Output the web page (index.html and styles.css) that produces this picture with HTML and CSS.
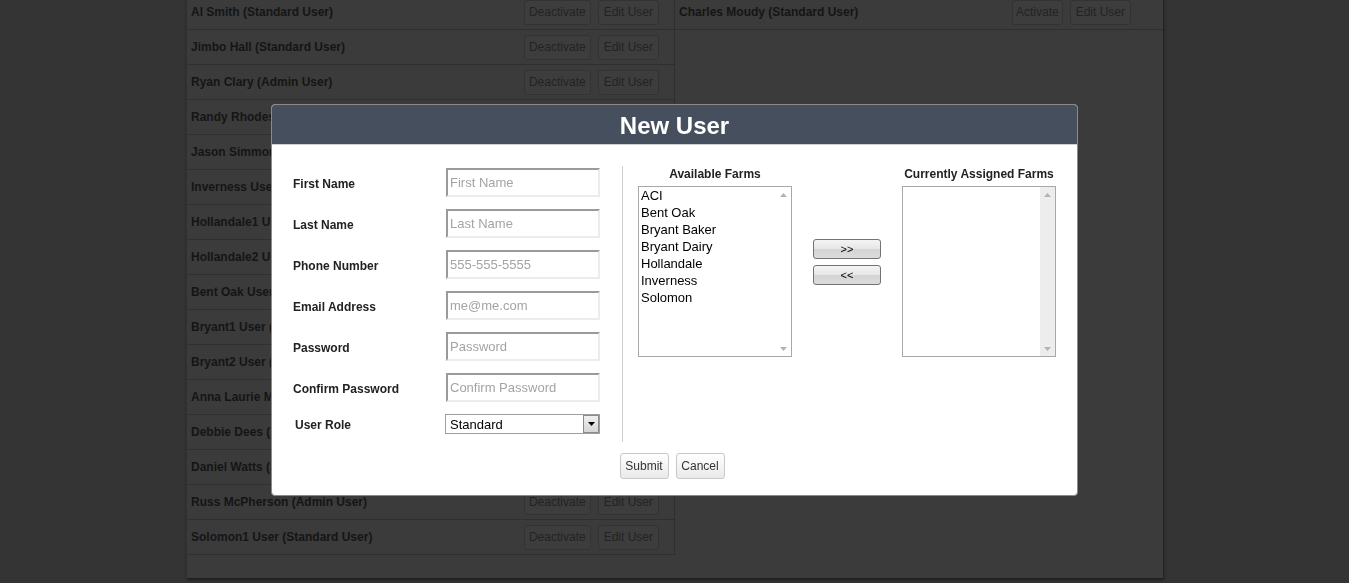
FILE: index.html
```html
<!DOCTYPE html>
<html>
<head>
<meta charset="utf-8">
<title>Users</title>
<link rel="stylesheet" href="styles.css">
</head>
<body>
<div class="panel">
  <div class="col col-left">
    <div class="row"><span class="name">Al Smith (Standard User)</span><button class="rbtn rbtn-d">Deactivate</button><button class="rbtn">Edit User</button></div>
    <div class="row"><span class="name">Jimbo Hall (Standard User)</span><button class="rbtn rbtn-d">Deactivate</button><button class="rbtn">Edit User</button></div>
    <div class="row"><span class="name">Ryan Clary (Admin User)</span><button class="rbtn rbtn-d">Deactivate</button><button class="rbtn">Edit User</button></div>
    <div class="row"><span class="name">Randy Rhodes (Standard User)</span><button class="rbtn rbtn-d">Deactivate</button><button class="rbtn">Edit User</button></div>
    <div class="row"><span class="name">Jason Simmons (Standard User)</span><button class="rbtn rbtn-d">Deactivate</button><button class="rbtn">Edit User</button></div>
    <div class="row"><span class="name">Inverness User (Standard User)</span><button class="rbtn rbtn-d">Deactivate</button><button class="rbtn">Edit User</button></div>
    <div class="row"><span class="name">Hollandale1 User (Standard User)</span><button class="rbtn rbtn-d">Deactivate</button><button class="rbtn">Edit User</button></div>
    <div class="row"><span class="name">Hollandale2 User (Standard User)</span><button class="rbtn rbtn-d">Deactivate</button><button class="rbtn">Edit User</button></div>
    <div class="row"><span class="name">Bent Oak User (Standard User)</span><button class="rbtn rbtn-d">Deactivate</button><button class="rbtn">Edit User</button></div>
    <div class="row"><span class="name">Bryant1 User (Standard User)</span><button class="rbtn rbtn-d">Deactivate</button><button class="rbtn">Edit User</button></div>
    <div class="row"><span class="name">Bryant2 User (Standard User)</span><button class="rbtn rbtn-d">Deactivate</button><button class="rbtn">Edit User</button></div>
    <div class="row"><span class="name">Anna Laurie Moore (Standard User)</span><button class="rbtn rbtn-d">Deactivate</button><button class="rbtn">Edit User</button></div>
    <div class="row"><span class="name">Debbie Dees (Admin User)</span><button class="rbtn rbtn-d">Deactivate</button><button class="rbtn">Edit User</button></div>
    <div class="row"><span class="name">Daniel Watts (Standard User)</span><button class="rbtn rbtn-d">Deactivate</button><button class="rbtn">Edit User</button></div>
    <div class="row"><span class="name">Russ McPherson (Admin User)</span><button class="rbtn rbtn-d">Deactivate</button><button class="rbtn">Edit User</button></div>
    <div class="row"><span class="name">Solomon1 User (Standard User)</span><button class="rbtn rbtn-d">Deactivate</button><button class="rbtn">Edit User</button></div>
  </div>
  <div class="col col-right">
    <div class="row row-r"><span class="name">Charles Moudy (Standard User)</span><button class="rbtn rbtn-a">Activate</button><button class="rbtn">Edit User</button></div>
  </div>
</div>

<div class="modal">
  <div class="modal-head">New User</div>
  <div class="modal-body">
    <div class="form">
      <label class="lbl">First Name</label><div class="inp">First Name</div>
      <label class="lbl">Last Name</label><div class="inp">Last Name</div>
      <label class="lbl">Phone Number</label><div class="inp">555-555-5555</div>
      <label class="lbl">Email Address</label><div class="inp">me@me.com</div>
      <label class="lbl">Password</label><div class="inp">Password</div>
      <label class="lbl">Confirm Password</label><div class="inp">Confirm Password</div>
      <label class="lbl lbl-role">User Role</label>
      <div class="sel"><span class="sel-val">Standard</span><span class="sel-arrow"><svg width="7" height="4" viewBox="0 0 7 4"><path d="M0 0H7L3.5 4Z" fill="#000"/></svg></span></div>
    </div>
    <div class="farms">
      <div class="fcol">
        <div class="fhead">Available Farms</div>
        <div class="lbox">
          <div class="litems">
            <div>ACI</div><div>Bent Oak</div><div>Bryant Baker</div><div>Bryant Dairy</div><div>Hollandale</div><div>Inverness</div><div>Solomon</div>
          </div>
          <div class="sbar sbar-white"><svg width="7" height="4" viewBox="0 0 7 4"><path d="M0 4H7L3.5 0Z" fill="#b4b4b4"/></svg><svg width="7" height="4" viewBox="0 0 7 4"><path d="M0 0H7L3.5 4Z" fill="#b4b4b4"/></svg></div>
        </div>
      </div>
      <div class="mid">
        <button class="mbtn">&gt;&gt;</button>
        <button class="mbtn">&lt;&lt;</button>
      </div>
      <div class="fcol">
        <div class="fhead">Currently Assigned Farms</div>
        <div class="lbox">
          <div class="litems"></div>
          <div class="sbar"><svg width="7" height="4" viewBox="0 0 7 4"><path d="M0 4H7L3.5 0Z" fill="#b4b4b4"/></svg><svg width="7" height="4" viewBox="0 0 7 4"><path d="M0 0H7L3.5 4Z" fill="#b4b4b4"/></svg></div>
        </div>
      </div>
    </div>
  </div>
  <div class="modal-foot">
    <button class="fbtn">Submit</button>
    <button class="fbtn">Cancel</button>
  </div>
</div>
</body>
</html>
```

FILE: styles.css
```css
html, body {
  margin: 0;
  padding: 0;
}
body {
  background: #343434;
  font-family: "Liberation Sans", Arial, sans-serif;
  height: 583px;
  overflow: hidden;
}
.panel {
  margin-left: 186px;
  margin-top: -5px;
  width: 977px;
  height: 583px;
  box-sizing: border-box;
  background: #3b3b3b;
  border-left: 1px solid #303030;
  box-shadow: 1px 2px 3px rgba(0,0,0,0.45);
  display: flex;
  align-items: flex-start;
}
.col {
  width: 488px;
  box-sizing: border-box;
}
.col-left {
  border-right: 1px solid #2f2f2f;
}
.row {
  height: 35px;
  box-sizing: border-box;
  border-bottom: 1px solid #2f2f2f;
  display: flex;
  align-items: center;
  padding: 0 15px 0 4px;
  gap: 7px;
}
.row-r {
  padding-right: 32px;
}
.name {
  flex: 1;
  font-size: 12px;
  font-weight: bold;
  color: #151515;
}
.rbtn {
  height: 25px;
  padding: 0 5px;
  border: 1px solid #333;
  border-radius: 3px;
  background: #3d3d3d;
  font-family: "Liberation Sans", Arial, sans-serif;
  font-size: 12px;
  color: #232323;
}
.rbtn-d {
  padding: 0 4px;
}
.rbtn-a {
  padding: 0 3px;
}
.modal {
  position: fixed;
  left: 271px;
  top: 104px;
  width: 807px;
  height: 392px;
  box-sizing: border-box;
  background: #fff;
  border: 1px solid #8a8a8a;
  border-radius: 4px;
  overflow: hidden;
}
.modal-head {
  height: 40px;
  background: #464f5d;
  border-bottom: 1px solid #d0d0d0;
  box-sizing: border-box;
  color: #fff;
  font-size: 24px;
  font-weight: bold;
  text-align: center;
  line-height: 41px;
}
.modal-body {
  display: flex;
  align-items: flex-start;
  padding: 21px 0 0 21px;
}
.form {
  display: grid;
  grid-template-columns: 153px 154px;
  grid-auto-rows: 29px;
  row-gap: 12px;
  align-items: center;
  padding-top: 2px;
}
.lbl {
  font-size: 12px;
  font-weight: bold;
  color: #222;
  padding-top: 2px;
}
.lbl-role {
  padding-left: 2px;
  align-self: start;
  margin-top: 2px;
}
.inp {
  height: 29px;
  box-sizing: border-box;
  border-style: solid;
  border-width: 2px;
  border-color: #9a9a9a #ececec #ececec #9a9a9a;
  font-size: 13px;
  line-height: 24px;
  padding-top: 1px;
  color: #a4a4a4;
  padding-left: 2px;
}
.sel {
  align-self: start;
  margin-left: -1px;
  height: 20px;
  box-sizing: border-box;
  border: 1px solid #a0a0a0;
  display: flex;
  align-items: center;
}
.sel-val {
  flex: 1;
  font-size: 13px;
  color: #000;
  padding-left: 4px;
}
.sel-arrow {
  width: 16px;
  height: 18px;
  box-sizing: border-box;
  border: 1px solid #8a8a8a;
  background: linear-gradient(#f0f0f0, #d6d6d6);
  display: flex;
  align-items: center;
  justify-content: center;
}
.farms {
  margin-left: 22px;
  height: 276px;
  box-sizing: border-box;
  border-left: 1px solid #cfcfcf;
  padding-left: 15px;
  display: flex;
  align-items: flex-start;
}
.fcol {
  width: 154px;
}
.fhead {
  font-size: 12px;
  font-weight: bold;
  color: #222;
  text-align: center;
  line-height: 17px;
  margin-bottom: 3px;
}
.lbox {
  height: 171px;
  box-sizing: border-box;
  border: 1px solid #a8a8a8;
  display: flex;
}
.litems {
  flex: 1;
  padding: 0 0 0 2px;
  font-size: 13px;
  line-height: 17px;
  color: #000;
}
.sbar {
  width: 15px;
  background: #ededed;
  display: flex;
  flex-direction: column;
  justify-content: space-between;
  align-items: center;
  padding: 6px 0 5px;
  box-sizing: border-box;
}
.sbar-white {
  background: #fff;
}
.mid {
  width: 110px;
  padding-top: 73px;
  display: flex;
  flex-direction: column;
  align-items: center;
  gap: 6px;
}
.mbtn {
  width: 68px;
  height: 20px;
  border: 1px solid #737373;
  border-radius: 3px;
  background: linear-gradient(#f4f4f4 0%, #e6e6e6 50%, #d4d4d4 51%, #dcdcdc 100%);
  font-family: "Liberation Sans", Arial, sans-serif;
  font-size: 11px;
  color: #000;
  padding: 0;
}
.modal-foot {
  display: flex;
  justify-content: center;
  gap: 7px;
  padding: 10px 5px 0 0;
}
.fbtn {
  width: 49px;
  height: 26px;
  border: 1px solid #c8c8c8;
  border-radius: 3px;
  background: linear-gradient(#ffffff, #e9e9e9);
  font-family: "Liberation Sans", Arial, sans-serif;
  font-size: 12px;
  color: #333;
  padding: 0;
}
```
